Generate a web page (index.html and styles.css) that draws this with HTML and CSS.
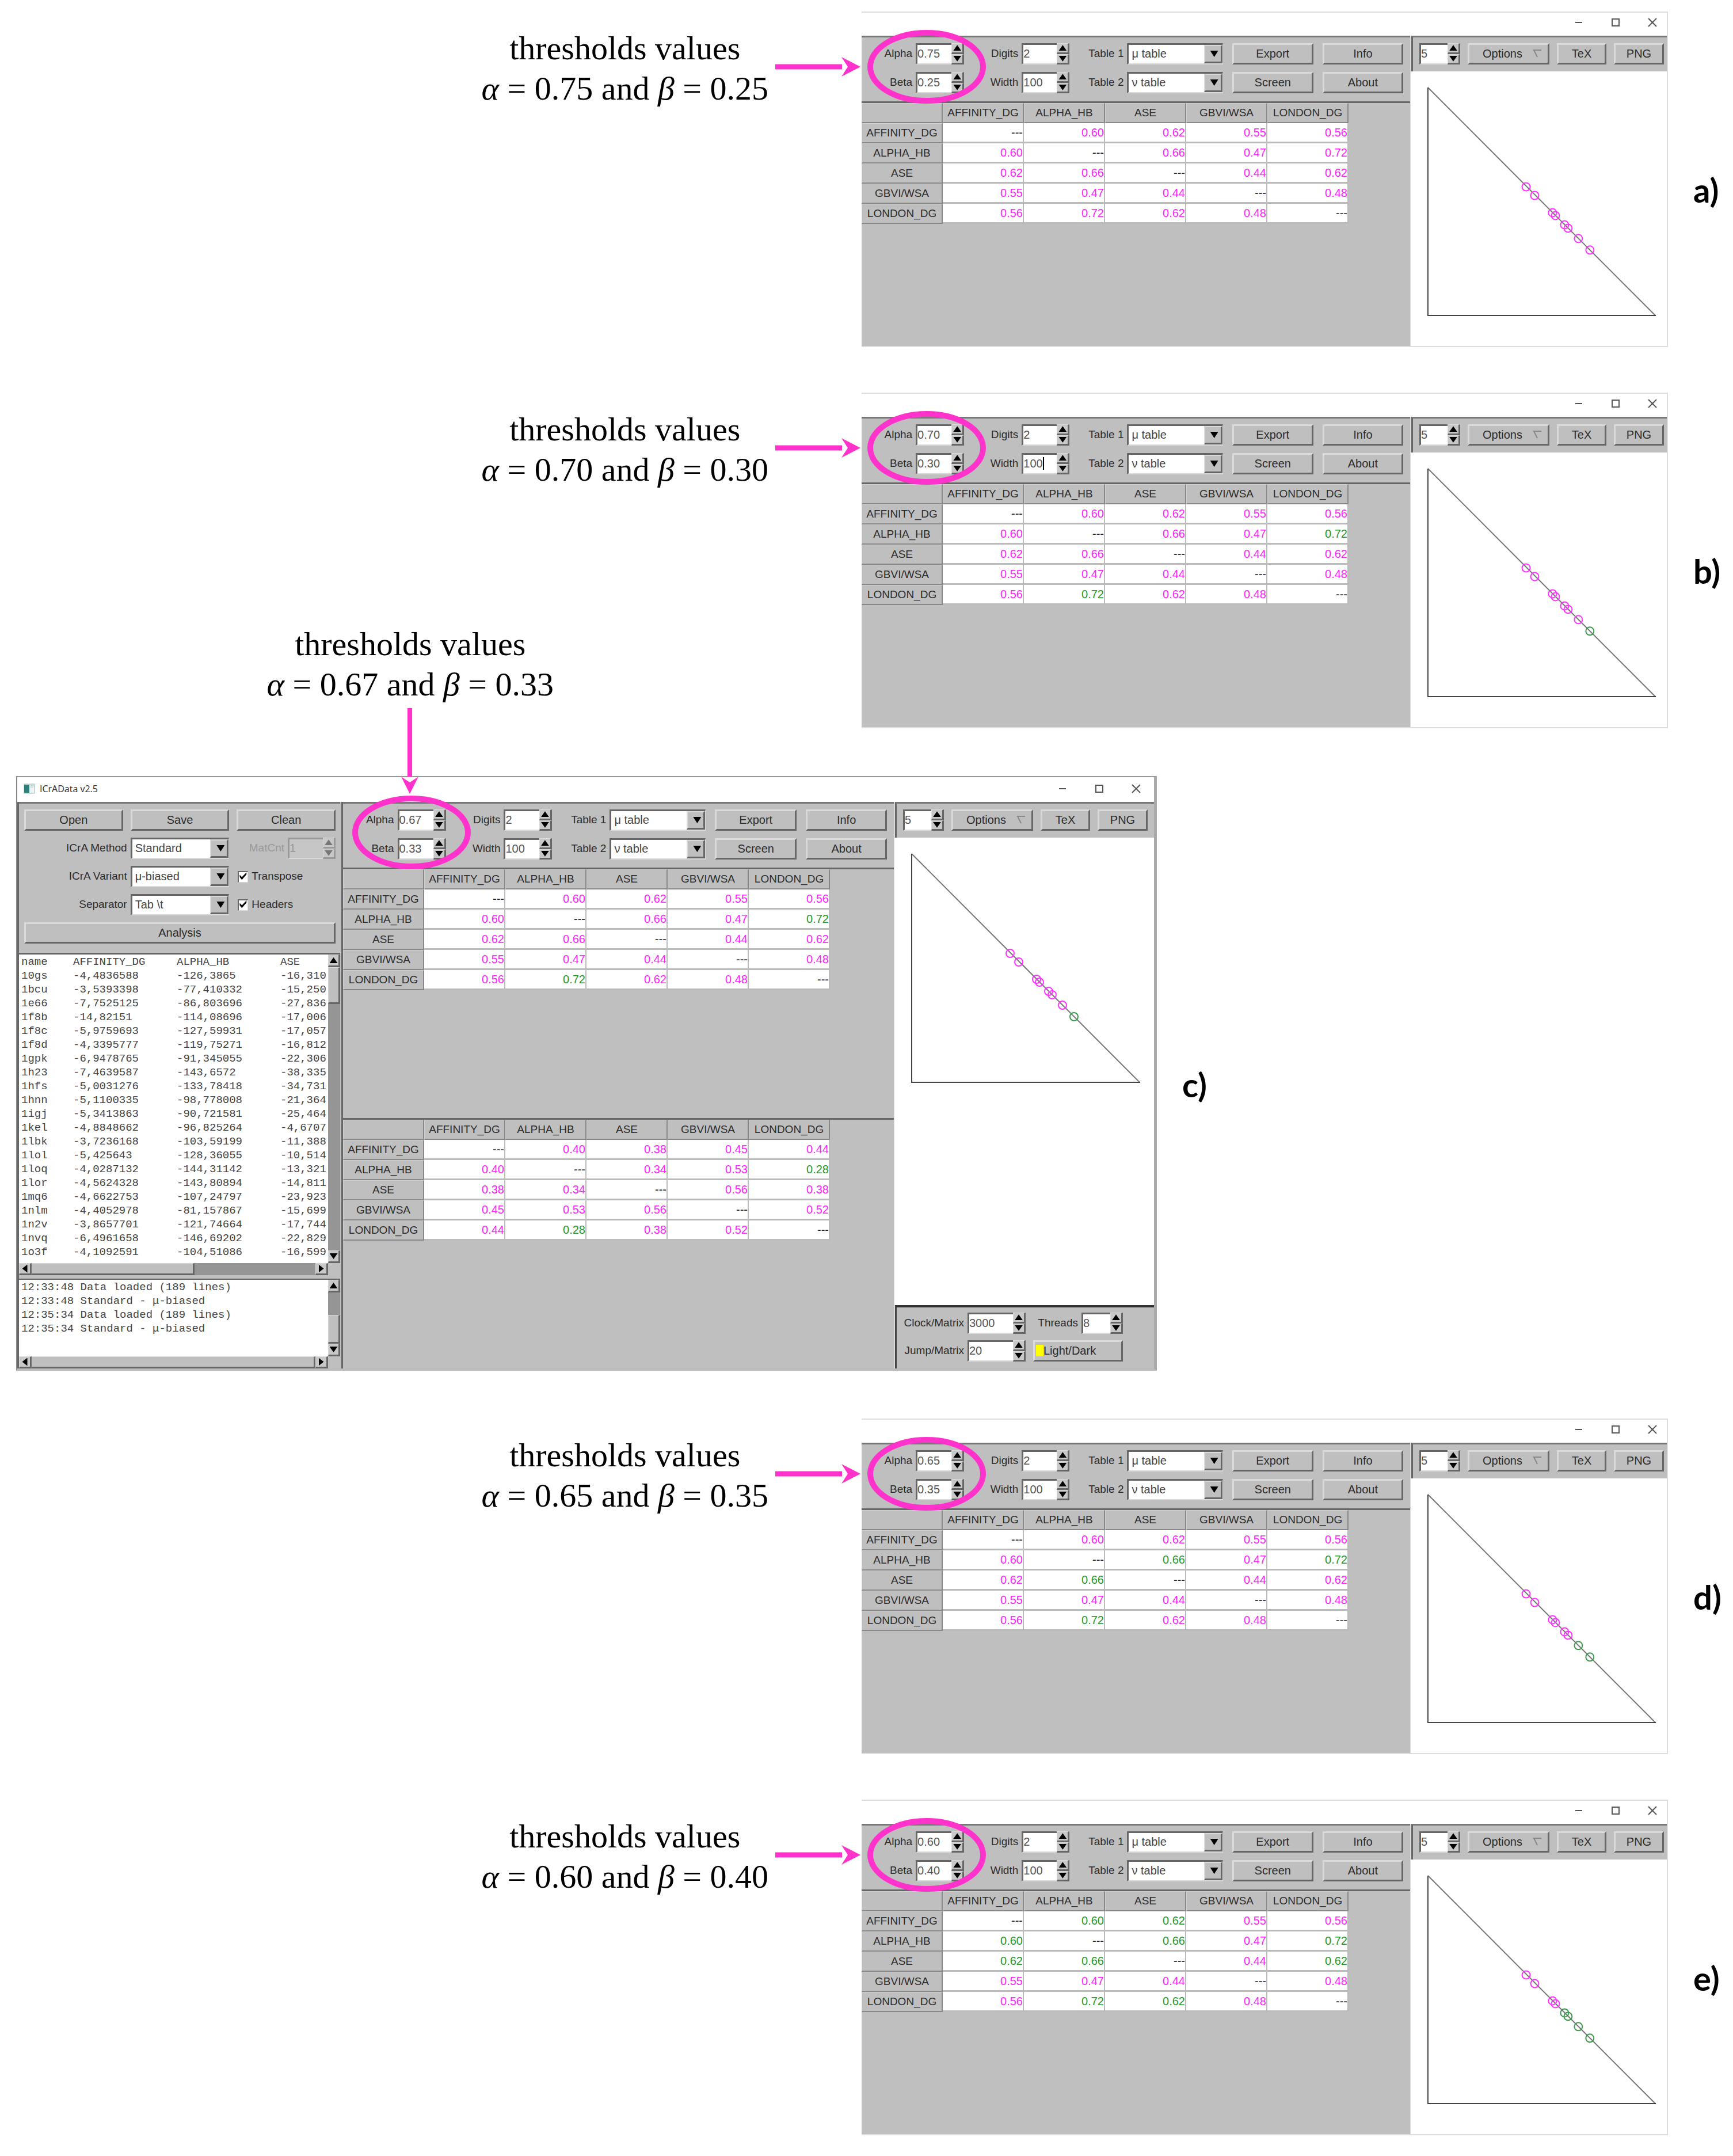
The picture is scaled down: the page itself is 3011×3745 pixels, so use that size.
FILE: index.html
```html
<!DOCTYPE html>
<html lang="en">
<head>
<meta charset="utf-8">
<title>ICrAData thresholds</title>
<link rel="stylesheet" href="styles.css">
</head>
<body>
<svg class="defs" width="0" height="0" aria-hidden="true">
  <symbol id="i-min" viewBox="0 0 16 16"><path d="M2 8H14" stroke="#555" stroke-width="2"/></symbol>
  <symbol id="i-max" viewBox="0 0 16 16"><rect x="2" y="2" width="12" height="12" fill="none" stroke="#555" stroke-width="2"/></symbol>
  <symbol id="i-close" viewBox="0 0 16 16"><path d="M1 1L15 15M15 1L1 15" stroke="#555" stroke-width="2"/></symbol>
  <symbol id="i-menu" viewBox="0 0 16 16"><path d="M15 2H2L8 14" fill="none" stroke="#888" stroke-width="2"/></symbol>
  <symbol id="i-callout" viewBox="0 0 368 130">
    <ellipse cx="263" cy="65" rx="98" ry="59" fill="none" stroke="#f3c" stroke-width="10"/>
    <path d="M0 65H116" stroke="#f3c" stroke-width="9"/>
    <path d="M148 65L115 48L126 65L115 82Z" fill="#f3c"/>
  </symbol>
  <symbol id="i-triangle" viewBox="0 0 446 478">
    <path d="M30 28L426 425" stroke="#777" stroke-width="2"/>
    <path d="M30 28V425H427" fill="none" stroke="#444" stroke-width="2"/>
  </symbol>
</svg>
<main class="page">

<section class="row">
  <div class="notes"><p class="note">thresholds values<br><i>α</i> = 0.75 and <i>β</i> = 0.25</p></div>
  <div class="window">
    <header class="titlebar"><button class="wbtn" aria-label="Minimize"><svg><use href="#i-min"/></svg></button><button class="wbtn" aria-label="Maximize"><svg><use href="#i-max"/></svg></button><button class="wbtn" aria-label="Close"><svg><use href="#i-close"/></svg></button></header>
    <div class="panes">
      <div class="middle">
        <div class="bar controls">
          <label for="a1">Alpha</label><span class="spin"><input id="a1" value="0.75"><span class="steps"><button aria-label="Up"></button><button aria-label="Down"></button></span></span>
          <label for="a2">Digits</label><span class="spin"><input id="a2" value="2"><span class="steps"><button aria-label="Up"></button><button aria-label="Down"></button></span></span>
          <label for="a3">Table 1</label><span class="drop"><select id="a3"><option>μ table</option></select></span>
          <button class="btn">Export</button><button class="btn">Info</button>
          <label for="a4">Beta</label><span class="spin"><input id="a4" value="0.25"><span class="steps"><button aria-label="Up"></button><button aria-label="Down"></button></span></span>
          <label for="a5">Width</label><span class="spin"><input id="a5" value="100"><span class="steps"><button aria-label="Up"></button><button aria-label="Down"></button></span></span>
          <label for="a6">Table 2</label><span class="drop"><select id="a6"><option>ν table</option></select></span>
          <button class="btn">Screen</button><button class="btn">About</button>
          <svg class="callout"><use href="#i-callout"/></svg>
        </div>
        <div class="sheet">
          <table>
            <tr><th></th><th>AFFINITY_DG</th><th>ALPHA_HB</th><th>ASE</th><th>GBVI/WSA</th><th>LONDON_DG</th></tr>
            <tr><th>AFFINITY_DG</th><td class="self">---</td><td>0.60</td><td>0.62</td><td>0.55</td><td>0.56</td></tr>
            <tr><th>ALPHA_HB</th><td>0.60</td><td class="self">---</td><td>0.66</td><td>0.47</td><td>0.72</td></tr>
            <tr><th>ASE</th><td>0.62</td><td>0.66</td><td class="self">---</td><td>0.44</td><td>0.62</td></tr>
            <tr><th>GBVI/WSA</th><td>0.55</td><td>0.47</td><td>0.44</td><td class="self">---</td><td>0.48</td></tr>
            <tr><th>LONDON_DG</th><td>0.56</td><td>0.72</td><td>0.62</td><td>0.48</td><td class="self">---</td></tr>
          </table>
        </div>
      </div>
      <div class="right">
        <div class="bar tools">
          <span class="spin"><input aria-label="Point size" value="5"><span class="steps"><button aria-label="Up"></button><button aria-label="Down"></button></span></span>
          <button class="btn menu">Options<svg><use href="#i-menu"/></svg></button><button class="btn">TeX</button><button class="btn">PNG</button>
        </div>
        <div class="canvas">
          <svg class="plot" viewBox="0 0 446 478"><use href="#i-triangle"/>
            <g class="pts"><circle cx="201" cy="201" r="7"/><circle cx="216" cy="216" r="7"/><circle cx="247" cy="246" r="7"/><circle cx="252" cy="251" r="7"/><circle cx="268" cy="267" r="7"/><circle cx="274" cy="273" r="7"/><circle cx="292" cy="291" r="7"/><circle cx="312" cy="311" r="7"/></g>
          </svg>
        </div>
      </div>
    </div>
  </div>
  <p class="tag">a)</p>
</section>

<section class="row">
  <div class="notes">
    <p class="note">thresholds values<br><i>α</i> = 0.70 and <i>β</i> = 0.30</p>
    <p class="note note-below">thresholds values<br><i>α</i> = 0.67 and <i>β</i> = 0.33</p>
  </div>
  <div class="window">
    <header class="titlebar"><button class="wbtn" aria-label="Minimize"><svg><use href="#i-min"/></svg></button><button class="wbtn" aria-label="Maximize"><svg><use href="#i-max"/></svg></button><button class="wbtn" aria-label="Close"><svg><use href="#i-close"/></svg></button></header>
    <div class="panes">
      <div class="middle">
        <div class="bar controls">
          <label for="b1">Alpha</label><span class="spin"><input id="b1" value="0.70"><span class="steps"><button aria-label="Up"></button><button aria-label="Down"></button></span></span>
          <label for="b2">Digits</label><span class="spin"><input id="b2" value="2"><span class="steps"><button aria-label="Up"></button><button aria-label="Down"></button></span></span>
          <label for="b3">Table 1</label><span class="drop"><select id="b3"><option>μ table</option></select></span>
          <button class="btn">Export</button><button class="btn">Info</button>
          <label for="b4">Beta</label><span class="spin"><input id="b4" value="0.30"><span class="steps"><button aria-label="Up"></button><button aria-label="Down"></button></span></span>
          <label for="b5">Width</label><span class="spin editing"><input id="b5" value="100"><span class="steps"><button aria-label="Up"></button><button aria-label="Down"></button></span></span>
          <label for="b6">Table 2</label><span class="drop"><select id="b6"><option>ν table</option></select></span>
          <button class="btn">Screen</button><button class="btn">About</button>
          <svg class="callout"><use href="#i-callout"/></svg>
        </div>
        <div class="sheet">
          <table>
            <tr><th></th><th>AFFINITY_DG</th><th>ALPHA_HB</th><th>ASE</th><th>GBVI/WSA</th><th>LONDON_DG</th></tr>
            <tr><th>AFFINITY_DG</th><td class="self">---</td><td>0.60</td><td>0.62</td><td>0.55</td><td>0.56</td></tr>
            <tr><th>ALPHA_HB</th><td>0.60</td><td class="self">---</td><td>0.66</td><td>0.47</td><td class="hit">0.72</td></tr>
            <tr><th>ASE</th><td>0.62</td><td>0.66</td><td class="self">---</td><td>0.44</td><td>0.62</td></tr>
            <tr><th>GBVI/WSA</th><td>0.55</td><td>0.47</td><td>0.44</td><td class="self">---</td><td>0.48</td></tr>
            <tr><th>LONDON_DG</th><td>0.56</td><td class="hit">0.72</td><td>0.62</td><td>0.48</td><td class="self">---</td></tr>
          </table>
        </div>
      </div>
      <div class="right">
        <div class="bar tools">
          <span class="spin"><input aria-label="Point size" value="5"><span class="steps"><button aria-label="Up"></button><button aria-label="Down"></button></span></span>
          <button class="btn menu">Options<svg><use href="#i-menu"/></svg></button><button class="btn">TeX</button><button class="btn">PNG</button>
        </div>
        <div class="canvas">
          <svg class="plot" viewBox="0 0 446 478"><use href="#i-triangle"/>
            <g class="pts"><circle cx="201" cy="201" r="7"/><circle cx="216" cy="216" r="7"/><circle cx="247" cy="246" r="7"/><circle cx="252" cy="251" r="7"/><circle cx="268" cy="267" r="7"/><circle cx="274" cy="273" r="7"/><circle cx="292" cy="291" r="7"/></g>
            <g class="pts hits"><circle cx="312" cy="311" r="7"/></g>
          </svg>
        </div>
      </div>
    </div>
  </div>
  <p class="tag">b)</p>
</section>

<section class="row row-full">
  <div class="window window-full">
    <header class="titlebar">
      <svg class="appicon" viewBox="0 0 20 18"><rect x="1" y="1" width="18" height="16" fill="#eef4f4" stroke="#9bb" stroke-width="1"/><rect x="1" y="2" width="9" height="14" fill="#2f8078"/><path d="M12 3H18M12 6H17" stroke="#abb" stroke-width="1"/></svg>
      <h1>ICrAData v2.5</h1>
      <button class="wbtn" aria-label="Minimize"><svg><use href="#i-min"/></svg></button><button class="wbtn" aria-label="Maximize"><svg><use href="#i-max"/></svg></button><button class="wbtn" aria-label="Close"><svg><use href="#i-close"/></svg></button>
    </header>
    <div class="panes">
      <div class="left">
        <div class="bar setup">
          <button class="btn">Open</button><button class="btn">Save</button><button class="btn">Clean</button>
          <label for="c7">ICrA Method</label><span class="drop"><select id="c7"><option>Standard</option></select></span>
          <span class="field off"><label for="c8">MatCnt</label><span class="spin"><input id="c8" value="1" disabled><span class="steps"><button aria-label="Up" disabled></button><button aria-label="Down" disabled></button></span></span></span>
          <label for="c9">ICrA Variant</label><span class="drop"><select id="c9"><option>μ-biased</option></select></span>
          <span class="tick"><input type="checkbox" id="c10" checked><label for="c10">Transpose</label></span>
          <label for="c11">Separator</label><span class="drop"><select id="c11"><option>Tab \t</option></select></span>
          <span class="tick"><input type="checkbox" id="c12" checked><label for="c12">Headers</label></span>
          <button class="btn wide">Analysis</button>
        </div>
        <div class="textbox">
          <textarea class="data" readonly aria-label="Data">name&#9;AFFINITY_DG&#9;ALPHA_HB&#9;ASE
10gs&#9;-4,4836588&#9;-126,3865&#9;-16,310
1bcu&#9;-3,5393398&#9;-77,410332&#9;-15,250
1e66&#9;-7,7525125&#9;-86,803696&#9;-27,836
1f8b&#9;-14,82151&#9;-114,08696&#9;-17,006
1f8c&#9;-5,9759693&#9;-127,59931&#9;-17,057
1f8d&#9;-4,3395777&#9;-119,75271&#9;-16,812
1gpk&#9;-6,9478765&#9;-91,345055&#9;-22,306
1h23&#9;-7,4639587&#9;-143,6572&#9;-38,335
1hfs&#9;-5,0031276&#9;-133,78418&#9;-34,731
1hnn&#9;-5,1100335&#9;-98,778008&#9;-21,364
1igj&#9;-5,3413863&#9;-90,721581&#9;-25,464
1kel&#9;-4,8848662&#9;-96,825264&#9;-4,6707
1lbk&#9;-3,7236168&#9;-103,59199&#9;-11,388
1lol&#9;-5,425643&#9;-128,36055&#9;-10,514
1loq&#9;-4,0287132&#9;-144,31142&#9;-13,321
1lor&#9;-4,5624328&#9;-143,80894&#9;-14,811
1mq6&#9;-4,6622753&#9;-107,24797&#9;-23,923
1nlm&#9;-4,4052978&#9;-81,157867&#9;-15,699
1n2v&#9;-3,8657701&#9;-121,74664&#9;-17,744
1nvq&#9;-6,4961658&#9;-146,69202&#9;-22,829
1o3f&#9;-4,1092591&#9;-104,51086&#9;-16,599</textarea>
          <div class="scroll down"><button aria-label="Up"></button><span class="thumb"></span><span class="track"></span><button aria-label="Down"></button></div>
          <div class="scroll across"><button aria-label="Left"></button><span class="thumb"></span><span class="track"></span><button aria-label="Right"></button></div>
        </div>
        <div class="textbox logbox">
          <textarea class="log" readonly aria-label="Log">12:33:48 Data loaded (189 lines)
12:33:48 Standard - μ-biased
12:35:34 Data loaded (189 lines)
12:35:34 Standard - μ-biased</textarea>
          <div class="scroll down"><button aria-label="Up"></button><span class="track"></span><span class="thumb"></span><button aria-label="Down"></button></div>
          <div class="scroll across"><button aria-label="Left"></button><span class="thumb"></span><button aria-label="Right"></button></div>
        </div>
      </div>
      <div class="middle">
        <div class="bar controls">
          <label for="c1">Alpha</label><span class="spin"><input id="c1" value="0.67"><span class="steps"><button aria-label="Up"></button><button aria-label="Down"></button></span></span>
          <label for="c2">Digits</label><span class="spin"><input id="c2" value="2"><span class="steps"><button aria-label="Up"></button><button aria-label="Down"></button></span></span>
          <label for="c3">Table 1</label><span class="drop"><select id="c3"><option>μ table</option></select></span>
          <button class="btn">Export</button><button class="btn">Info</button>
          <label for="c4">Beta</label><span class="spin"><input id="c4" value="0.33"><span class="steps"><button aria-label="Up"></button><button aria-label="Down"></button></span></span>
          <label for="c5">Width</label><span class="spin"><input id="c5" value="100"><span class="steps"><button aria-label="Up"></button><button aria-label="Down"></button></span></span>
          <label for="c6">Table 2</label><span class="drop"><select id="c6"><option>ν table</option></select></span>
          <button class="btn">Screen</button><button class="btn">About</button>
          <svg class="callout-top" viewBox="0 0 208 280">
            <ellipse cx="104" cy="216" rx="98" ry="59" fill="none" stroke="#f3c" stroke-width="10"/>
            <path d="M101 0V119" stroke="#f3c" stroke-width="8"/>
            <path d="M101 149L86 119L101 129L116 119Z" fill="#f3c"/>
          </svg>
        </div>
        <div class="sheet">
          <table>
            <tr><th></th><th>AFFINITY_DG</th><th>ALPHA_HB</th><th>ASE</th><th>GBVI/WSA</th><th>LONDON_DG</th></tr>
            <tr><th>AFFINITY_DG</th><td class="self">---</td><td>0.60</td><td>0.62</td><td>0.55</td><td>0.56</td></tr>
            <tr><th>ALPHA_HB</th><td>0.60</td><td class="self">---</td><td>0.66</td><td>0.47</td><td class="hit">0.72</td></tr>
            <tr><th>ASE</th><td>0.62</td><td>0.66</td><td class="self">---</td><td>0.44</td><td>0.62</td></tr>
            <tr><th>GBVI/WSA</th><td>0.55</td><td>0.47</td><td>0.44</td><td class="self">---</td><td>0.48</td></tr>
            <tr><th>LONDON_DG</th><td>0.56</td><td class="hit">0.72</td><td>0.62</td><td>0.48</td><td class="self">---</td></tr>
          </table>
        </div>
        <div class="sheet">
          <table>
            <tr><th></th><th>AFFINITY_DG</th><th>ALPHA_HB</th><th>ASE</th><th>GBVI/WSA</th><th>LONDON_DG</th></tr>
            <tr><th>AFFINITY_DG</th><td class="self">---</td><td>0.40</td><td>0.38</td><td>0.45</td><td>0.44</td></tr>
            <tr><th>ALPHA_HB</th><td>0.40</td><td class="self">---</td><td>0.34</td><td>0.53</td><td class="hit">0.28</td></tr>
            <tr><th>ASE</th><td>0.38</td><td>0.34</td><td class="self">---</td><td>0.56</td><td>0.38</td></tr>
            <tr><th>GBVI/WSA</th><td>0.45</td><td>0.53</td><td>0.56</td><td class="self">---</td><td>0.52</td></tr>
            <tr><th>LONDON_DG</th><td>0.44</td><td class="hit">0.28</td><td>0.38</td><td>0.52</td><td class="self">---</td></tr>
          </table>
        </div>
      </div>
      <div class="right">
        <div class="bar tools">
          <span class="spin"><input aria-label="Point size" value="5"><span class="steps"><button aria-label="Up"></button><button aria-label="Down"></button></span></span>
          <button class="btn menu">Options<svg><use href="#i-menu"/></svg></button><button class="btn">TeX</button><button class="btn">PNG</button>
        </div>
        <div class="canvas">
          <svg class="plot" viewBox="0 0 446 478"><use href="#i-triangle"/>
            <g class="pts"><circle cx="201" cy="201" r="7"/><circle cx="216" cy="216" r="7"/><circle cx="247" cy="246" r="7"/><circle cx="252" cy="251" r="7"/><circle cx="268" cy="267" r="7"/><circle cx="274" cy="273" r="7"/><circle cx="292" cy="291" r="7"/></g>
            <g class="pts hits"><circle cx="312" cy="311" r="7"/></g>
          </svg>
        </div>
        <div class="bar engine">
          <span class="field"><label for="c13">Clock/Matrix</label><span class="spin"><input id="c13" value="3000"><span class="steps"><button aria-label="Up"></button><button aria-label="Down"></button></span></span></span>
          <span class="field short"><label for="c14">Threads</label><span class="spin"><input id="c14" value="8"><span class="steps"><button aria-label="Up"></button><button aria-label="Down"></button></span></span></span>
          <span class="field"><label for="c15">Jump/Matrix</label><span class="spin"><input id="c15" value="20"><span class="steps"><button aria-label="Up"></button><button aria-label="Down"></button></span></span></span>
          <button class="btn theme"><span class="lamp"></span>Light/Dark</button>
        </div>
      </div>
    </div>
  </div>
  <p class="tag">c)</p>
</section>

<section class="row">
  <div class="notes"><p class="note">thresholds values<br><i>α</i> = 0.65 and <i>β</i> = 0.35</p></div>
  <div class="window">
    <header class="titlebar"><button class="wbtn" aria-label="Minimize"><svg><use href="#i-min"/></svg></button><button class="wbtn" aria-label="Maximize"><svg><use href="#i-max"/></svg></button><button class="wbtn" aria-label="Close"><svg><use href="#i-close"/></svg></button></header>
    <div class="panes">
      <div class="middle">
        <div class="bar controls">
          <label for="d1">Alpha</label><span class="spin"><input id="d1" value="0.65"><span class="steps"><button aria-label="Up"></button><button aria-label="Down"></button></span></span>
          <label for="d2">Digits</label><span class="spin"><input id="d2" value="2"><span class="steps"><button aria-label="Up"></button><button aria-label="Down"></button></span></span>
          <label for="d3">Table 1</label><span class="drop"><select id="d3"><option>μ table</option></select></span>
          <button class="btn">Export</button><button class="btn">Info</button>
          <label for="d4">Beta</label><span class="spin"><input id="d4" value="0.35"><span class="steps"><button aria-label="Up"></button><button aria-label="Down"></button></span></span>
          <label for="d5">Width</label><span class="spin"><input id="d5" value="100"><span class="steps"><button aria-label="Up"></button><button aria-label="Down"></button></span></span>
          <label for="d6">Table 2</label><span class="drop"><select id="d6"><option>ν table</option></select></span>
          <button class="btn">Screen</button><button class="btn">About</button>
          <svg class="callout"><use href="#i-callout"/></svg>
        </div>
        <div class="sheet">
          <table>
            <tr><th></th><th>AFFINITY_DG</th><th>ALPHA_HB</th><th>ASE</th><th>GBVI/WSA</th><th>LONDON_DG</th></tr>
            <tr><th>AFFINITY_DG</th><td class="self">---</td><td>0.60</td><td>0.62</td><td>0.55</td><td>0.56</td></tr>
            <tr><th>ALPHA_HB</th><td>0.60</td><td class="self">---</td><td class="hit">0.66</td><td>0.47</td><td class="hit">0.72</td></tr>
            <tr><th>ASE</th><td>0.62</td><td class="hit">0.66</td><td class="self">---</td><td>0.44</td><td>0.62</td></tr>
            <tr><th>GBVI/WSA</th><td>0.55</td><td>0.47</td><td>0.44</td><td class="self">---</td><td>0.48</td></tr>
            <tr><th>LONDON_DG</th><td>0.56</td><td class="hit">0.72</td><td>0.62</td><td>0.48</td><td class="self">---</td></tr>
          </table>
        </div>
      </div>
      <div class="right">
        <div class="bar tools">
          <span class="spin"><input aria-label="Point size" value="5"><span class="steps"><button aria-label="Up"></button><button aria-label="Down"></button></span></span>
          <button class="btn menu">Options<svg><use href="#i-menu"/></svg></button><button class="btn">TeX</button><button class="btn">PNG</button>
        </div>
        <div class="canvas">
          <svg class="plot" viewBox="0 0 446 478"><use href="#i-triangle"/>
            <g class="pts"><circle cx="201" cy="201" r="7"/><circle cx="216" cy="216" r="7"/><circle cx="247" cy="246" r="7"/><circle cx="252" cy="251" r="7"/><circle cx="268" cy="267" r="7"/><circle cx="274" cy="273" r="7"/></g>
            <g class="pts hits"><circle cx="292" cy="291" r="7"/><circle cx="312" cy="311" r="7"/></g>
          </svg>
        </div>
      </div>
    </div>
  </div>
  <p class="tag">d)</p>
</section>

<section class="row">
  <div class="notes"><p class="note">thresholds values<br><i>α</i> = 0.60 and <i>β</i> = 0.40</p></div>
  <div class="window">
    <header class="titlebar"><button class="wbtn" aria-label="Minimize"><svg><use href="#i-min"/></svg></button><button class="wbtn" aria-label="Maximize"><svg><use href="#i-max"/></svg></button><button class="wbtn" aria-label="Close"><svg><use href="#i-close"/></svg></button></header>
    <div class="panes">
      <div class="middle">
        <div class="bar controls">
          <label for="e1">Alpha</label><span class="spin"><input id="e1" value="0.60"><span class="steps"><button aria-label="Up"></button><button aria-label="Down"></button></span></span>
          <label for="e2">Digits</label><span class="spin"><input id="e2" value="2"><span class="steps"><button aria-label="Up"></button><button aria-label="Down"></button></span></span>
          <label for="e3">Table 1</label><span class="drop"><select id="e3"><option>μ table</option></select></span>
          <button class="btn">Export</button><button class="btn">Info</button>
          <label for="e4">Beta</label><span class="spin"><input id="e4" value="0.40"><span class="steps"><button aria-label="Up"></button><button aria-label="Down"></button></span></span>
          <label for="e5">Width</label><span class="spin"><input id="e5" value="100"><span class="steps"><button aria-label="Up"></button><button aria-label="Down"></button></span></span>
          <label for="e6">Table 2</label><span class="drop"><select id="e6"><option>ν table</option></select></span>
          <button class="btn">Screen</button><button class="btn">About</button>
          <svg class="callout"><use href="#i-callout"/></svg>
        </div>
        <div class="sheet">
          <table>
            <tr><th></th><th>AFFINITY_DG</th><th>ALPHA_HB</th><th>ASE</th><th>GBVI/WSA</th><th>LONDON_DG</th></tr>
            <tr><th>AFFINITY_DG</th><td class="self">---</td><td class="hit">0.60</td><td class="hit">0.62</td><td>0.55</td><td>0.56</td></tr>
            <tr><th>ALPHA_HB</th><td class="hit">0.60</td><td class="self">---</td><td class="hit">0.66</td><td>0.47</td><td class="hit">0.72</td></tr>
            <tr><th>ASE</th><td class="hit">0.62</td><td class="hit">0.66</td><td class="self">---</td><td>0.44</td><td class="hit">0.62</td></tr>
            <tr><th>GBVI/WSA</th><td>0.55</td><td>0.47</td><td>0.44</td><td class="self">---</td><td>0.48</td></tr>
            <tr><th>LONDON_DG</th><td>0.56</td><td class="hit">0.72</td><td class="hit">0.62</td><td>0.48</td><td class="self">---</td></tr>
          </table>
        </div>
      </div>
      <div class="right">
        <div class="bar tools">
          <span class="spin"><input aria-label="Point size" value="5"><span class="steps"><button aria-label="Up"></button><button aria-label="Down"></button></span></span>
          <button class="btn menu">Options<svg><use href="#i-menu"/></svg></button><button class="btn">TeX</button><button class="btn">PNG</button>
        </div>
        <div class="canvas">
          <svg class="plot" viewBox="0 0 446 478"><use href="#i-triangle"/>
            <g class="pts"><circle cx="201" cy="201" r="7"/><circle cx="216" cy="216" r="7"/><circle cx="247" cy="246" r="7"/><circle cx="252" cy="251" r="7"/></g>
            <g class="pts hits"><circle cx="268" cy="267" r="7"/><circle cx="274" cy="273" r="7"/><circle cx="292" cy="291" r="7"/><circle cx="312" cy="311" r="7"/></g>
          </svg>
        </div>
      </div>
    </div>
  </div>
  <p class="tag">e)</p>
</section>

</main>
</body>
</html>
```

FILE: styles.css
```css
:root {
  --face: #bfbfbf;
  --light: #dadada;
  --dark: #666;
  --ink: #2c2c2c;
}

* { box-sizing: border-box; }

body {
  margin: 0;
  background: #fff;
  color: var(--ink);
  font-family: "Liberation Sans", Arial, sans-serif;
  font-size: 19px;
}

button, input, select, textarea {
  margin: 0;
  padding: 0;
  border: 0;
  border-radius: 0;
  outline: 0;
  color: inherit;
  font-family: inherit;
  font-size: 20px;
}

.defs { position: absolute; }

/* figure rows: note, window, letter */
.page {
  display: flex;
  flex-direction: column;
  gap: 79px;
  padding: 20px 0 32px;
}

.row {
  display: grid;
  grid-template-columns: 1497fr 1401fr 113fr;
}

.row-full {
  grid-template-columns: 1982fr 1001fr;
  margin: 4px 0;
  padding-left: 28px;
}

.notes {
  display: flex;
  flex-direction: column;
  justify-content: space-between;
  align-items: flex-end;
  padding: 29px 162px 41px 0;
}

.note {
  margin: 0;
  color: #000;
  font-family: "Liberation Serif", "Times New Roman", serif;
  font-size: 58px;
  line-height: 70px;
  text-align: center;
}

.note-below { margin-right: 373px; }

.tag {
  margin: 0;
  padding: 278px 0 0 44px;
  color: #000;
  font-family: Lato, sans-serif;
  font-size: 58px;
  font-weight: 700;
  line-height: 64px;
}

.row-full .tag { padding-top: 504px; }

/* window frame */
.window {
  display: flex;
  flex-direction: column;
  min-width: 0;
  border: 2px solid #ddd;
  border-left: 0;
}

.window-full {
  border-color: #999 #aaa #bbb #888;
  border-style: solid;
  border-width: 2px 5px 4px 2px;
}

.titlebar {
  display: flex;
  align-items: center;
  justify-content: flex-end;
  gap: 48px;
  height: 40px;
  padding: 0 17px 6px 0;
  background: #fff;
}

.window-full .titlebar {
  height: 43px;
  padding: 0 23px 4px 11px;
}

.titlebar h1 {
  flex: 1;
  margin: 0 0 0 -40px;
  font-family: "Open Sans", sans-serif;
  font-size: 16px;
  font-weight: 400;
  line-height: 20px;
}

.appicon { width: 20px; height: 18px; }
.wbtn { width: 16px; height: 16px; background: none; }
.wbtn svg { display: block; width: 16px; height: 16px; }

.panes {
  display: grid;
  flex: 1;
  grid-template-columns: 953fr 446fr;
  min-height: 539px;
  background: var(--face);
}

.window-full .panes { grid-template-columns: 563fr 960fr 452fr; }

.left, .middle, .right {
  display: flex;
  flex-direction: column;
  min-width: 0;
}

.left { border-left: 3px solid var(--dark); padding-right: 2px; }
.window-full .middle { border-left: 3px solid var(--dark); }
.right { border-left: 1px solid var(--light); background: var(--light); }

/* toolbars */
.bar {
  position: relative;
  display: grid;
  row-gap: 13px;
  grid-auto-rows: 37px;
  align-items: stretch;
  padding-top: 10px;
  border-top: 3px solid #777;
  background: var(--face);
}

.bar label {
  align-self: center;
  justify-self: end;
  padding: 0 6px 2px 0;
  line-height: 22px;
  white-space: nowrap;
}

.controls {
  grid-template-columns: 94fr 84fr 100fr 83fr 100fr 166fr 157fr 156fr;
  padding-right: 12px;
  padding-bottom: 14px;
}

.controls .btn { margin-left: 16px; }

.tools {
  grid-template-columns: 71fr 142fr 86fr 87fr;
  column-gap: 13px;
  margin-left: 1px;
  padding: 10px 5px 12px 11px;
  border-left: 3px solid var(--dark);
}

.window-full .tools { padding-right: 11px; }

.setup {
  grid-template-columns: 184fr 184fr 171fr;
  row-gap: 12px;
  padding: 10px 8px 16px 9px;
}

.setup > .btn:nth-of-type(-n+2), .setup > .drop { margin-right: 13px; }
.setup .wide { grid-column: 1 / -1; }

.engine {
  grid-template-columns: 213px 156px;
  column-gap: 13px;
  row-gap: 11px;
  margin-left: 1px;
  padding: 9px 0 12px 11px;
  border-left: 3px solid #444;
  border-top: 4px solid #333;
}

/* controls */
.btn {
  min-width: 0;
  padding-bottom: 2px;
  border: solid;
  border-width: 3px;
  border-color: var(--light) var(--dark) var(--dark) var(--light);
  background: var(--face);
  line-height: 22px;
  text-align: center;
}

.menu {
  display: flex;
  align-items: center;
  justify-content: flex-end;
  gap: 18px;
  padding-right: 10px;
}

.menu svg { width: 16px; height: 16px; }

.theme {
  display: flex;
  align-items: center;
  padding-left: 2px;
}

.lamp { width: 13px; height: 20px; background: #ff0; }

.field { display: flex; align-items: stretch; justify-content: flex-end; }
.field .spin { width: 101px; }
.field.short .spin { width: 72px; }
.field.off .spin { width: 83px; }

.spin { position: relative; display: flex; min-width: 0; }

.spin input {
  flex: 1;
  width: 0;
  min-width: 0;
  padding-bottom: 2px;
  border: solid;
  border-width: 3px 0 2px 3px;
  border-color: var(--dark) var(--light) var(--light) var(--dark);
  background: #fff;
  color: #555;
  line-height: 22px;
}

.steps { display: grid; width: 22px; grid-template-rows: 1fr 1fr; }

.steps button, .scroll button {
  display: grid;
  place-items: center;
  border: solid;
  border-width: 1px 3px 3px 1px;
  border-color: var(--light) var(--dark) var(--dark) var(--light);
  background: #c8c8c8;
}

.steps button::before, .scroll button::before {
  content: "";
  width: 14px;
  height: 10px;
  background: #000;
  clip-path: polygon(50% 0, 100% 100%, 0 100%);
}

.steps button:last-child::before,
.scroll.down button:last-child::before { clip-path: polygon(0 0, 100% 0, 50% 100%); }

.off { color: #999; }
.off .spin input { border-color: #999 var(--light) var(--light) #999; background: #c6c6c6; color: #999; }
.off .steps button { border-color: var(--light) #999 #999 var(--light); }
.off .steps button::before { background: #777; }

.editing::after {
  content: "";
  position: absolute;
  top: 7px;
  left: 37px;
  width: 2px;
  height: 22px;
  background: #000;
}

.drop { position: relative; display: flex; min-width: 0; }

.drop select {
  flex: 1;
  min-width: 0;
  padding: 0 0 2px 5px;
  border: solid;
  border-width: 3px 1px 2px 3px;
  border-color: var(--dark) var(--light) var(--light) var(--dark);
  background: #fff;
  color: #444;
  appearance: none;
}

.drop::before {
  content: "";
  position: absolute;
  top: 3px;
  right: 1px;
  bottom: 2px;
  width: 27px;
  border: solid;
  border-width: 2px 3px 3px 2px;
  border-color: var(--light) var(--dark) var(--dark) var(--light);
  background: var(--face);
  pointer-events: none;
}

.drop::after {
  content: "";
  position: absolute;
  top: 13px;
  right: 8px;
  width: 14px;
  height: 11px;
  background: #000;
  clip-path: polygon(0 0, 100% 0, 50% 100%);
  pointer-events: none;
}

.tick { display: flex; align-items: center; gap: 6px; padding-left: 2px; }

.tick input {
  display: block;
  width: 18px;
  height: 20px;
  border: solid;
  border-width: 2px 1px 1px 2px;
  border-color: var(--dark) var(--light) var(--light) var(--dark);
  background: #fff;
  appearance: none;
}

.tick input:checked::before {
  content: "";
  display: block;
  width: 14px;
  height: 14px;
  background: #000;
  clip-path: polygon(8% 35%, 35% 65%, 92% 5%, 92% 32%, 35% 98%, 8% 65%);
}

/* pink markers over the alpha and beta fields */
.callout {
  position: absolute;
  top: -14px;
  left: -150px;
  width: 368px;
  height: 130px;
  pointer-events: none;
}

.callout-top {
  position: absolute;
  top: -166px;
  left: 15px;
  width: 208px;
  height: 280px;
  pointer-events: none;
}

/* result tables */
.sheet {
  flex: 1;
  border-top: 3px solid #666;
  background: var(--face);
}

.sheet table {
  width: 846px;
  border-collapse: separate;
  border-spacing: 0;
  table-layout: fixed;
}

.sheet th, .sheet td {
  width: 141px;
  height: 35px;
  padding: 0;
  overflow: hidden;
  line-height: 22px;
  white-space: nowrap;
}

.sheet th {
  border: solid;
  border-width: 1px 2px 2px 1px;
  border-color: #d0d0d0 #888 #888 #d0d0d0;
  font-weight: 400;
  text-align: center;
}

.sheet th:first-child { width: 141px; }

.sheet td {
  border: solid #bbb;
  border-width: 0 2px 3px 0;
  background: #fff;
  color: #f2f;
  font-size: 20px;
  text-align: right;
}

.sheet .hit { color: #1f9a2a; }
.sheet .self { color: #222; }

/* plot */
.canvas { flex: 1; background: #fff; }
.plot { display: block; width: 446px; max-width: 100%; }
.pts circle { fill: none; stroke: #f3f; stroke-width: 2; }
.pts.hits circle { stroke: #3a9a4a; }

/* text boxes with their scroll bars */
.textbox {
  display: grid;
  grid-template-columns: 1fr 21px;
  grid-template-rows: auto 21px;
  border-top: 3px solid var(--dark);
}

.logbox { margin-top: 6px; border-top-width: 2px; }

.textbox textarea {
  display: block;
  width: 100%;
  padding: 1px 0 0 4px;
  overflow: hidden;
  border-right: 2px solid #fff;
  background: #fff;
  color: #444;
  font-family: "Liberation Mono", "Courier New", monospace;
  font-size: 19px;
  line-height: 24px;
  resize: none;
  tab-size: 90px;
  white-space: pre;
}

.data { height: 536px; }
.log { height: 133px; }

.scroll { display: flex; background: #959595; }
.scroll.down { flex-direction: column; }
.scroll button { flex: 0 0 22px; }

.thumb {
  border: solid;
  border-width: 1px 3px 3px 1px;
  border-color: var(--light) var(--dark) var(--dark) var(--light);
  background: var(--face);
}

.down .thumb { flex: 60; }
.down .track { flex: 431; }
.across .thumb { flex: 280; }
.across .track { flex: 210; }
.logbox .down .thumb { flex: 48; }
.logbox .down .track { flex: 41; }

.scroll.across button::before { width: 9px; height: 14px; }
.across button:first-child::before { clip-path: polygon(0 50%, 100% 0, 100% 100%); }
.across button:last-child::before { clip-path: polygon(0 0, 100% 50%, 0 100%); }
```
